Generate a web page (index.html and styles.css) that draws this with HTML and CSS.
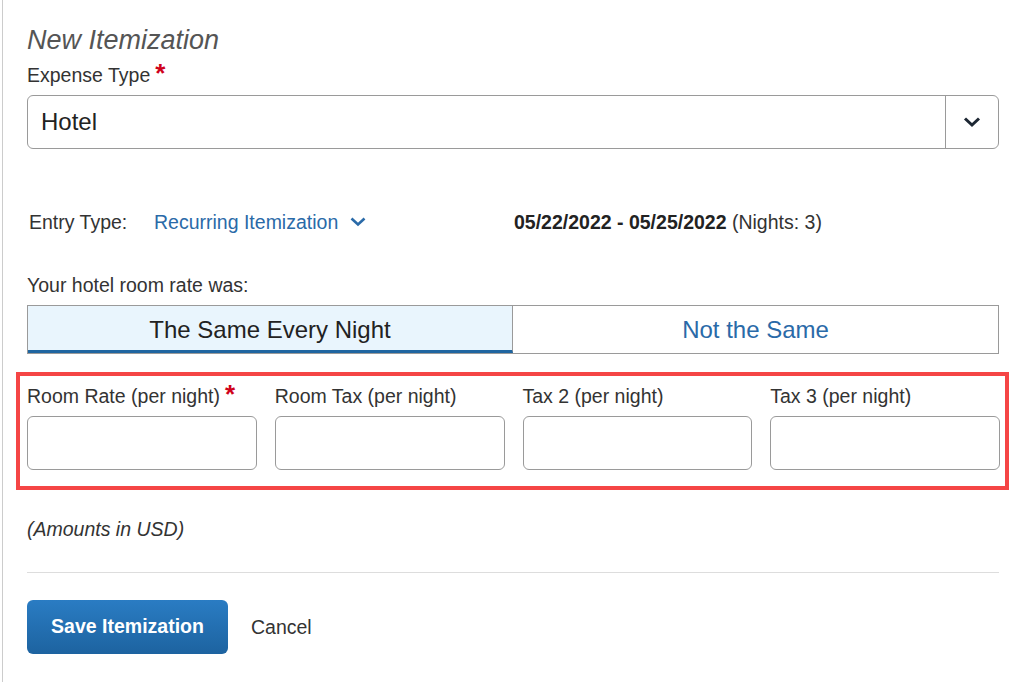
FILE: index.html
```html
<!DOCTYPE html>
<html>
<head>
<meta charset="utf-8">
<link rel="stylesheet" href="styles.css">
</head>
<body>
<div class="page">
  <h1 class="title">New Itemization</h1>
  <div class="label">Expense Type<span class="req">*</span></div>
  <div class="select">
    <div class="select-value">Hotel</div>
    <div class="select-btn">
      <svg width="18" height="12" viewBox="0 0 18 12"><path d="M2 2.5 L9 9 L16 2.5" fill="none" stroke="#1d2733" stroke-width="3"/></svg>
    </div>
  </div>
  <div class="entry-row">
    <span class="entry-label">Entry Type:</span>
    <span class="entry-link">Recurring Itemization
      <svg class="chev" width="16" height="10" viewBox="0 0 16 10"><path d="M1.5 1.5 L8 7.5 L14.5 1.5" fill="none" stroke="#2a6aa8" stroke-width="2.6"/></svg>
    </span>
    <span class="dates"><b>05/22/2022 - 05/25/2022</b> (Nights: 3)</span>
  </div>
  <div class="rate-q">Your hotel room rate was:</div>
  <div class="toggle">
    <div class="seg seg-on">The Same Every Night</div>
    <div class="seg seg-off">Not the Same</div>
  </div>
  <div class="highlight">
    <div class="field">
      <div class="flabel">Room Rate (per night)<span class="req">*</span></div>
      <div class="input"></div>
    </div>
    <div class="field">
      <div class="flabel">Room Tax (per night)</div>
      <div class="input"></div>
    </div>
    <div class="field">
      <div class="flabel">Tax 2 (per night)</div>
      <div class="input"></div>
    </div>
    <div class="field">
      <div class="flabel">Tax 3 (per night)</div>
      <div class="input"></div>
    </div>
  </div>
  <div class="amounts">(Amounts in USD)</div>
  <div class="divider"></div>
  <div class="actions">
    <button class="save">Save Itemization</button>
    <span class="cancel">Cancel</span>
  </div>
</div>
</body>
</html>
```

FILE: styles.css
```css
html, body {
  margin: 0;
  padding: 0;
  background: #fff;
}
body {
  font-family: "Liberation Sans", Arial, sans-serif;
  color: #333;
  font-size: 19.5px;
}
.page {
  margin-left: 2px;
  border-left: 1px solid #cccccc;
  min-height: 682px;
  box-sizing: border-box;
  padding: 25px 0 0 24px;
  width: 997px;
}
.title {
  margin: 0;
  font-size: 27px;
  font-weight: normal;
  font-style: italic;
  color: #555;
  line-height: 30px;
}
.label {
  margin-top: 9px;
  line-height: 22px;
  height: 22px;
  color: #333;
}
.req {
  color: #d0021b;
  font-size: 26px;
  font-weight: bold;
  margin-left: 5px;
  line-height: 0;
}
.select {
  margin-top: 9px;
  height: 54px;
  box-sizing: border-box;
  border: 1px solid #9a9a9a;
  border-radius: 6px;
  display: flex;
  width: 972px;
}
.select-value {
  flex: 1;
  display: flex;
  align-items: center;
  padding-left: 13px;
  font-size: 24px;
  color: #222;
}
.select-btn {
  width: 52px;
  border-left: 1px solid #9a9a9a;
  display: flex;
  align-items: center;
  justify-content: center;
}
.entry-row {
  margin-top: 61px;
  display: flex;
  align-items: center;
  line-height: 24px;
  height: 24px;
}
.entry-label {
  margin-left: 2px;
  width: 125px;
  color: #333;
}
.entry-link {
  color: #2a6aa8;
  width: 360px;
  display: flex;
  align-items: center;
}
.chev {
  margin-left: 12px;
}
.dates {
  color: #333;
}
.dates b {
  color: #222;
}
.rate-q {
  margin-top: 40px;
  line-height: 22px;
}
.toggle {
  margin-top: 9px;
  display: flex;
  width: 972px;
  height: 49px;
  box-sizing: border-box;
  border: 1px solid #9a9a9a;
}
.seg {
  display: flex;
  align-items: center;
  justify-content: center;
  font-size: 24px;
  box-sizing: border-box;
}
.seg-on {
  width: 485px;
  background: #e9f5fd;
  color: #222;
  border-bottom: 3px solid #1f65a0;
  border-right: 1px solid #9a9a9a;
  padding-top: 3px;
}
.seg-off {
  flex: 1;
  color: #2a6aa8;
}
.highlight {
  margin: 18px 0 0 -11px;
  width: 993px;
  box-sizing: border-box;
  border: 4px solid #f54545;
  padding: 9px 5px 16px 7px;
  display: grid;
  grid-template-columns: repeat(4, 1fr);
  column-gap: 18px;
}
.flabel {
  line-height: 22px;
  height: 22px;
  color: #333;
  white-space: nowrap;
}
.input {
  margin-top: 9px;
  height: 54px;
  box-sizing: border-box;
  border: 1px solid #9a9a9a;
  border-radius: 6px;
}
.amounts {
  margin-top: 28px;
  font-style: italic;
  line-height: 22px;
}
.divider {
  margin-top: 32px;
  width: 972px;
  height: 1px;
  background: #dddddd;
}
.actions {
  margin-top: 27px;
  display: flex;
  align-items: center;
}
.save {
  width: 201px;
  height: 54px;
  border: none;
  border-radius: 6px;
  background: linear-gradient(#2a7cc3, #1d63a0);
  color: #fff;
  font-family: "Liberation Sans", Arial, sans-serif;
  font-weight: bold;
  font-size: 19.5px;
  padding: 0 0 2px 0;
}
.cancel {
  margin-left: 23px;
  color: #333;
}
```
